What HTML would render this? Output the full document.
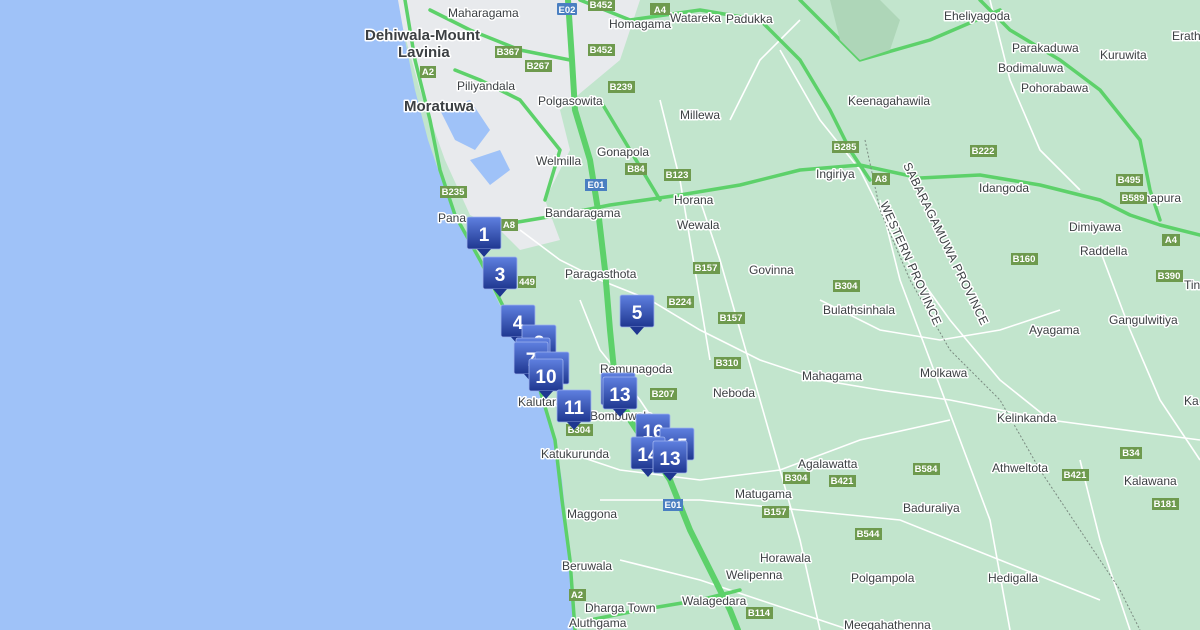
<!DOCTYPE html>
<html><head><meta charset="utf-8"><style>
html,body{margin:0;padding:0;width:1200px;height:630px;overflow:hidden;background:#c2e5cd}
svg{display:block}
.t{font-family:"Liberation Sans",sans-serif;font-size:12px;fill:#3c4043;stroke:#fff;stroke-width:3px;paint-order:stroke;stroke-linejoin:round}
.b{font-size:15px;font-weight:bold;fill:#3c4043}
.s rect{fill:#6e9a4e}
.s text{font-family:"Liberation Sans",sans-serif;font-size:9.5px;font-weight:bold;fill:#fff;text-anchor:middle}
.e rect{fill:#4a7fc1}
.r{fill:none;stroke:#fff;stroke-width:1.6}
.g{fill:none;stroke:#5dd16a;stroke-width:3.5;stroke-linecap:round;stroke-linejoin:round}
.G{fill:none;stroke:#5dd16a;stroke-width:6;stroke-linecap:round;stroke-linejoin:round}
.m text{font-family:"Liberation Sans",sans-serif;font-size:19px;font-weight:bold;fill:#fff;text-anchor:middle}
</style></head><body>
<svg width="1200" height="630" viewBox="0 0 1200 630" xmlns="http://www.w3.org/2000/svg">
<defs>
<linearGradient id="mg" x1="0" y1="0" x2="0" y2="1"><stop offset="0" stop-color="#5f80e0"/><stop offset="1" stop-color="#1f3790"/></linearGradient>
<g id="mk"><rect x="0" y="0" width="34" height="32" rx="2" fill="url(#mg)" stroke="#9fb3ee" stroke-width="0.8"/><path d="M10 32 L17 40 L24 32 Z" fill="#1f3790"/></g>
</defs>
<rect width="1200" height="630" fill="#c2e5cd"/>
<!-- urban grey -->
<path d="M395 0 L640 0 L620 60 L560 110 L570 150 L545 200 L560 240 L520 250 L500 230 L470 215 L445 160 L420 90 Z" fill="#e8eaed"/>
<!-- ocean -->
<path d="M0 0 L398 0 L405 40 L415 90 L428 140 L445 190 L462 225 L478 260 L495 295 L512 330 L528 365 L545 405 L555 440 L562 480 L568 540 L572 590 L575 630 L0 630 Z" fill="#9fc2f8"/>
<!-- lagoons -->
<path d="M440 110 L470 100 L490 130 L475 150 L455 140 Z M470 160 L500 150 L510 170 L490 185 Z" fill="#9fc2f8"/>
<!-- white roads -->
<g class="r">
<path d="M520 230 L560 260 L600 280 L650 300 L700 330 L760 360 L820 380 L880 390 L950 400 L1050 420 L1200 440"/>
<path d="M560 450 L620 470 L700 480 L780 470 L860 440 L950 420"/>
<path d="M600 500 L700 500 L800 510 L900 520 L1000 560 L1100 600"/>
<path d="M700 200 L720 260 L740 330 L760 400 L780 470 L800 540 L820 630"/>
<path d="M880 200 L900 280 L930 360 L960 440 L990 520 L1010 630"/>
<path d="M780 50 L820 120 L860 170 L900 250 L950 320 L1000 380 L1050 420"/>
<path d="M660 100 L680 180 L690 240 L700 300 L710 360"/>
<path d="M620 560 L700 580 L760 600 L850 630"/>
<path d="M990 0 L1010 80 L1040 150 L1080 190"/>
<path d="M1100 250 L1130 330 L1160 400 L1200 460"/>
<path d="M580 300 L600 350 L640 400 L660 430"/>
<path d="M730 120 L760 60 L800 20"/>
<path d="M1080 460 L1100 540 L1130 630"/>
<path d="M820 300 L880 330 L940 340 L1000 330 L1060 310"/>
</g>
<!-- green roads -->
<path class="G" d="M568 0 L572 60 L575 110 L590 160 L598 210 L605 270 L610 330 L615 380 L630 420 L650 450 L670 480 L690 530 L710 570 L730 610 L738 630"/>
<path class="g" d="M405 0 L415 60 L430 120 L440 170 L455 215 L480 260 L510 320 L540 390 L555 440 L562 500 L570 560 L575 630"/>
<path class="g" d="M500 225 L560 215 L610 205 L680 195 L740 185 L800 170 L860 165 L920 178 L980 175 L1040 185 L1100 200 L1130 215 L1160 225 L1200 235"/>
<path class="g" d="M580 0 L630 20 L700 10 L760 20 L800 60 L830 110 L850 150 L870 180"/>
<path class="g" d="M980 0 L1010 30 L1060 60 L1100 90 L1140 140 L1150 190 L1160 220"/>
<path class="g" d="M430 10 L470 30 L520 50 L570 60"/>
<path class="g" d="M455 70 L480 80 L520 100 L560 150 L545 200"/>
<path class="g" d="M600 100 L630 150 L660 200"/>
<path class="g" d="M590 620 L640 610 L700 600 L740 590"/>
<path class="g" d="M800 0 L820 20 L860 60 L930 40 L1000 10"/>
<!-- province line -->
<path d="M865 140 L880 210 L910 280 L950 350 L1000 400 L1040 470 L1080 530 L1120 590 L1140 630" fill="none" stroke="#7a8a80" stroke-width="1" stroke-dasharray="2,2"/>
<path d="M830 0 L840 40 L860 60 L890 50 L900 20 L880 0 Z" fill="#aed6b8"/>
<!-- labels -->
<g class="t">
<text x="448" y="17">Maharagama</text>
<text x="609" y="28">Homagama</text>
<text x="670" y="22">Watareka</text>
<text x="726" y="23">Padukka</text>
<text x="944" y="20">Eheliyagoda</text>
<text x="1012" y="52">Parakaduwa</text>
<text x="1100" y="59">Kuruwita</text>
<text x="1172" y="40">Erath</text>
<text x="998" y="72">Bodimaluwa</text>
<text x="1021" y="92">Pohorabawa</text>
<text x="457" y="90">Piliyandala</text>
<text x="538" y="105">Polgasowita</text>
<text x="680" y="119">Millewa</text>
<text x="848" y="105">Keenagahawila</text>
<text x="597" y="156">Gonapola</text>
<text x="536" y="165">Welmilla</text>
<text x="816" y="178">Ingiriya</text>
<text x="979" y="192">Idangoda</text>
<text x="1125" y="202">Ratnapura</text>
<text x="1069" y="231">Dimiyawa</text>
<text x="1080" y="255">Raddella</text>
<text x="674" y="204">Horana</text>
<text x="545" y="217">Bandaragama</text>
<text x="438" y="222">Pana</text>
<text x="677" y="229">Wewala</text>
<text x="565" y="278">Paragasthota</text>
<text x="749" y="274">Govinna</text>
<text x="823" y="314">Bulathsinhala</text>
<text x="1029" y="334">Ayagama</text>
<text x="1109" y="324">Gangulwitiya</text>
<text x="600" y="373">Remunagoda</text>
<text x="713" y="397">Neboda</text>
<text x="802" y="380">Mahagama</text>
<text x="920" y="377">Molkawa</text>
<text x="997" y="422">Kelinkanda</text>
<text x="518" y="406">Kalutara</text>
<text x="590" y="420">Bombuwala</text>
<text x="541" y="458">Katukurunda</text>
<text x="798" y="468">Agalawatta</text>
<text x="992" y="472">Athweltota</text>
<text x="1124" y="485">Kalawana</text>
<text x="735" y="498">Matugama</text>
<text x="903" y="512">Baduraliya</text>
<text x="567" y="518">Maggona</text>
<text x="760" y="562">Horawala</text>
<text x="726" y="579">Welipenna</text>
<text x="851" y="582">Polgampola</text>
<text x="988" y="582">Hedigalla</text>
<text x="562" y="570">Beruwala</text>
<text x="585" y="612">Dharga Town</text>
<text x="682" y="605">Walagedara</text>
<text x="569" y="627">Aluthgama</text>
<text x="844" y="629">Meegahathenna</text>
<text x="1184" y="289">Tin</text>
<text x="1184" y="405">Ka</text>
<text class="b" x="365" y="40">Dehiwala-Mount</text>
<text class="b" x="398" y="57">Lavinia</text>
<text class="b" x="404" y="111">Moratuwa</text>
<text x="0" y="0" transform="translate(880,204) rotate(66)" style="font-size:12px;letter-spacing:0.5px">WESTERN PROVINCE</text>
<text x="0" y="0" transform="translate(903,165) rotate(64)" style="font-size:12px;letter-spacing:0.5px">SABARAGAMUWA PROVINCE</text>
</g>
<!-- shields -->
<g class="s">
<g class="e"><rect x="557" y="3" width="20" height="12" rx="1"/><text x="567" y="13">E02</text></g>
<rect x="588" y="0" width="27" height="11"/><text x="601" y="8">B452</text>
<rect x="650" y="3" width="20" height="12"/><text x="660" y="13">A4</text>
<rect x="588" y="44" width="27" height="12"/><text x="601" y="53">B452</text>
<rect x="495" y="46" width="27" height="12"/><text x="508" y="55">B367</text>
<rect x="525" y="60" width="27" height="12"/><text x="538" y="69">B267</text>
<rect x="420" y="66" width="16" height="12"/><text x="428" y="75">A2</text>
<rect x="608" y="81" width="27" height="12"/><text x="621" y="90">B239</text>
<rect x="625" y="163" width="22" height="12"/><text x="636" y="172">B84</text>
<g class="e"><rect x="585" y="179" width="22" height="12"/><text x="596" y="188">E01</text></g>
<rect x="664" y="169" width="27" height="12"/><text x="677" y="178">B123</text>
<rect x="440" y="186" width="27" height="12"/><text x="453" y="195">B235</text>
<rect x="500" y="219" width="18" height="12"/><text x="509" y="228">A8</text>
<rect x="832" y="141" width="27" height="12"/><text x="845" y="150">B285</text>
<rect x="970" y="145" width="27" height="12"/><text x="983" y="154">B222</text>
<rect x="872" y="173" width="18" height="12"/><text x="881" y="182">A8</text>
<rect x="1116" y="174" width="27" height="12"/><text x="1129" y="183">B495</text>
<rect x="1120" y="192" width="27" height="12"/><text x="1133" y="201">B589</text>
<rect x="1162" y="234" width="18" height="12"/><text x="1171" y="243">A4</text>
<rect x="1156" y="270" width="27" height="12"/><text x="1169" y="279">B390</text>
<rect x="1011" y="253" width="27" height="12"/><text x="1024" y="262">B160</text>
<rect x="693" y="262" width="27" height="12"/><text x="706" y="271">B157</text>
<rect x="518" y="276" width="18" height="12"/><text x="527" y="285">449</text>
<rect x="667" y="296" width="27" height="12"/><text x="680" y="305">B224</text>
<rect x="833" y="280" width="27" height="12"/><text x="846" y="289">B304</text>
<rect x="718" y="312" width="27" height="12"/><text x="731" y="321">B157</text>
<rect x="714" y="357" width="27" height="12"/><text x="727" y="366">B310</text>
<rect x="650" y="388" width="27" height="12"/><text x="663" y="397">B207</text>
<rect x="566" y="424" width="27" height="12"/><text x="579" y="433">B304</text>
<rect x="1120" y="447" width="22" height="12"/><text x="1131" y="456">B34</text>
<rect x="1062" y="469" width="27" height="12"/><text x="1075" y="478">B421</text>
<rect x="913" y="463" width="27" height="12"/><text x="926" y="472">B584</text>
<rect x="783" y="472" width="27" height="12"/><text x="796" y="481">B304</text>
<rect x="829" y="475" width="27" height="12"/><text x="842" y="484">B421</text>
<g class="e"><rect x="663" y="499" width="20" height="12"/><text x="673" y="508">E01</text></g>
<rect x="762" y="506" width="27" height="12"/><text x="775" y="515">B157</text>
<rect x="1152" y="498" width="27" height="12"/><text x="1165" y="507">B181</text>
<rect x="855" y="528" width="27" height="12"/><text x="868" y="537">B544</text>
<rect x="569" y="589" width="17" height="12"/><text x="577" y="598">A2</text>
<rect x="746" y="607" width="27" height="12"/><text x="759" y="616">B114</text>
</g>
<!-- markers -->
<g class="m">
<g transform="translate(467,217)"><use href="#mk"/><text x="17" y="24">1</text></g>
<g transform="translate(483,257)"><use href="#mk"/><text x="17" y="24">3</text></g>
<g transform="translate(501,305)"><use href="#mk"/><text x="17" y="24">4</text></g>
<g transform="translate(522,325)"><use href="#mk"/><text x="17" y="24">8</text></g>
<g transform="translate(516,338)"><use href="#mk"/></g>
<g transform="translate(514,342)"><use href="#mk"/><text x="17" y="24">7</text></g>
<g transform="translate(535,352)"><use href="#mk"/></g>
<g transform="translate(529,359)"><use href="#mk"/><text x="17" y="24">10</text></g>
<g transform="translate(557,390)"><use href="#mk"/><text x="17" y="24">11</text></g>
<g transform="translate(620,295)"><use href="#mk"/><text x="17" y="24">5</text></g>
<g transform="translate(601,373)"><use href="#mk"/></g>
<g transform="translate(603,377)"><use href="#mk"/><text x="17" y="24">13</text></g>
<g transform="translate(636,414)"><use href="#mk"/><text x="17" y="24">16</text></g>
<g transform="translate(660,428)"><use href="#mk"/><text x="17" y="24">15</text></g>
<g transform="translate(631,437)"><use href="#mk"/><text x="17" y="24">14</text></g>
<g transform="translate(653,441)"><use href="#mk"/><text x="17" y="24">13</text></g>
</g>
</svg>
</body></html>
